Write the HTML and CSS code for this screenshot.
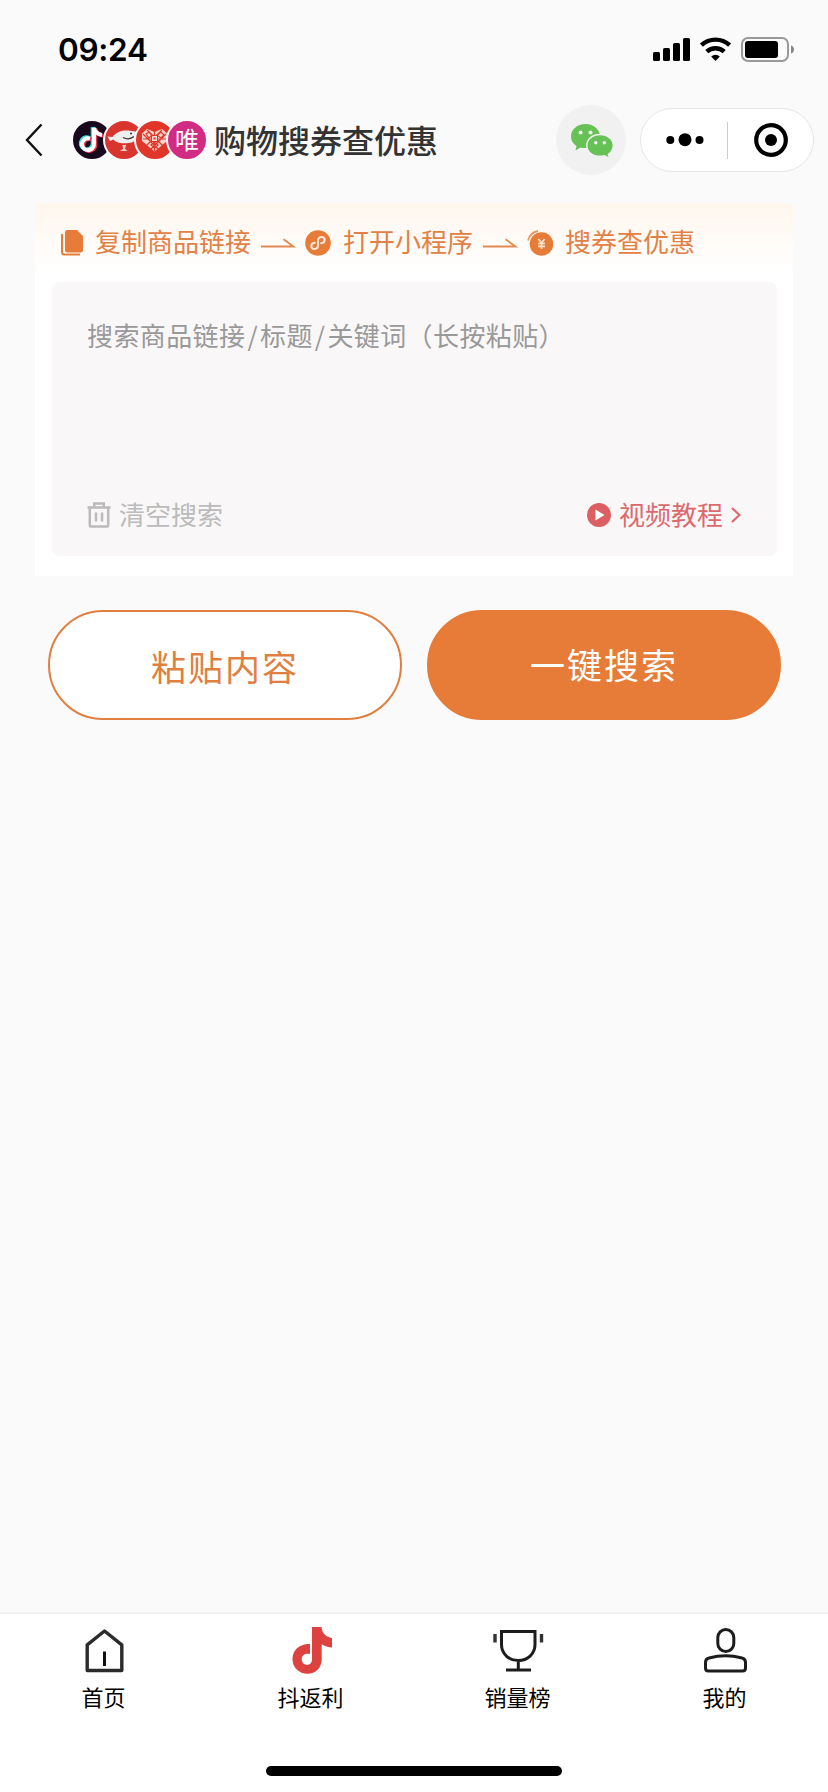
FILE: index.html
```html
<!DOCTYPE html>
<html lang="zh-CN">
<head>
    <meta charset="UTF-8">
    <meta name="viewport" content="width=device-width, initial-scale=1.0">
    <title>购物搜券查优惠</title>
    <link rel="stylesheet" href="styles.css">
</head>
<body>
    <div class="status-bar">
        <span class="time">09:24</span>
        <svg class="status-icons" width="142" height="26" viewBox="0 0 142 26">
            <rect x="0" y="15" width="7" height="9" rx="1.5"/>
            <rect x="10" y="11" width="7" height="13" rx="1.5"/>
            <rect x="20" y="6" width="7" height="18" rx="1.5"/>
            <rect x="30" y="1" width="7" height="23" rx="1.5"/>
            <g fill="none" stroke="#000" stroke-width="4.4">
                <path d="M48.4 8.2a20.5 20.5 0 0 1 28.2 0"/>
                <path d="M53.8 14.6a13 13 0 0 1 17.4 0"/>
            </g>
            <path d="M58.2 19.4a6.5 6.5 0 0 1 8.6 0L62.5 24z"/>
            <rect x="89" y="1" width="46" height="23" rx="6" fill="none" stroke="#999" stroke-width="2"/>
            <rect x="92" y="4" width="33" height="17" rx="3"/>
            <path d="M138 8.500c4 1 4 7 0 8z" fill="#888"/>
        </svg>
    </div>

    <div class="nav-bar">
        <svg class="back" width="18" height="34" viewBox="0 0 18 34">
            <path d="M16.500 1.500L2 17l14.500 15.500" fill="none" stroke="#111" stroke-width="2.400"/>
        </svg>
        <div class="logos">
            <span class="logo douyin">
                <svg width="38" height="38" viewBox="0 0 38 38" fill="none" stroke-width="4">
                    <path d="M17 17.500a6 6 0 1 0 4 5.500V7c1 4 4 6.500 8 7" stroke="#35e3df" transform="translate(-1.300 -.8)"/>
                    <path d="M17 17.500a6 6 0 1 0 4 5.500V7c1 4 4 6.500 8 7" stroke="#ef3158" transform="translate(1.300 .8)"/>
                    <path d="M17 17.500a6 6 0 1 0 4 5.500V7c1 4 4 6.500 8 7" stroke="#fff"/>
                </svg>
            </span>
            <span class="logo jd">
                <svg width="38" height="38" viewBox="0 0 38 38">
                    <path d="M2.500 15.500l5 .5c3-4 8-6.500 13-6.500 4 0 8 .5 11 1.500v3c0 5-3 8-8 8-7 1-13-.5-15-3.500L5 20z" fill="#eee"/>
                    <path d="M18 16.500c4 2 8 1.500 11-1" fill="none" stroke="#333" stroke-width="1.300"/>
                    <circle cx="26" cy="12.500" r="1" fill="#333"/>
                    <path d="M17.500 24h3.500l-1 4h-2zM15 30l4-3 3.500 3z" fill="#f5cfc5"/>
                </svg>
            </span>
            <span class="logo pdd">
                <svg width="38" height="38" viewBox="0 0 38 38">
                    <path d="M18.500 30.500L6 20v-7.500l5-4.500 7.500 3L26 8l5 4.500V20z" fill="#f9d5cc"/>
                    <g fill="none" stroke="#e1352a" stroke-width="1.200">
                        <path d="M11 9l17 17M7 13l15 15M26 9L9 26M30 13L15 28M18.500 9v6M18.500 21v9M7 18h8M22 18h9"/>
                        <path d="M10 13l3-2 3 3-3 3zM21 14l4-3 3 3-3 3zM15 24l3.500-3 3.500 3-3.500 3z"/>
                    </g>
                    <rect x="15.500" y="14.500" width="6" height="6" fill="#f9d5cc" stroke="#e1352a"/>
                    <rect x="17.500" y="16.500" width="2" height="2" fill="#e1352a"/>
                </svg>
            </span>
            <span class="logo vip">唯</span>
        </div>
        <h1>购物搜券查优惠</h1>
        <div class="wechat">
            <svg width="44" height="36" viewBox="0 0 44 36">
                <path d="M15.500 1C7.200 1 1 6.500 1 13.500c0 4 2.200 7.500 5.500 9.500l-1 4.500 5-3c1.600.4 3.300.6 5 .6C24 25 30 20 30 13.500S24 1 15.500 1z" fill="#67c256"/>
                <circle cx="10.500" cy="9.500" r="2" fill="#f1f1f1"/>
                <circle cx="20.500" cy="9.500" r="2" fill="#f1f1f1"/>
                <path d="M30 11.500c-7.500 0-13.200 4.700-13.200 11 0 6.200 5.700 10.800 13.200 10.800 1.600 0 3-.2 4.400-.6l5 2.600-1-4c3-2 4.900-5 4.900-8.800 0-6.300-5.800-11-13.300-11z" fill="#67c256" stroke="#f1f1f1" stroke-width="1.400"/>
                <circle cx="25.800" cy="19.800" r="1.700" fill="#f1f1f1"/>
                <circle cx="34.300" cy="19.800" r="1.700" fill="#f1f1f1"/>
            </svg>
        </div>
        <div class="capsule">
            <svg class="more" width="38" height="14" viewBox="0 0 38 14">
                <circle cx="4.300" cy="7" r="4"/>
                <circle cx="19" cy="6.700" r="6.500"/>
                <circle cx="33.500" cy="7" r="4"/>
            </svg>
            <span class="divider"></span>
            <svg class="close" width="34" height="34" viewBox="0 0 34 34">
                <circle cx="17" cy="17" r="14.800" fill="none" stroke="#000" stroke-width="4.200"/>
                <circle cx="17" cy="17" r="6"/>
            </svg>
        </div>
    </div>

    <div class="card">
        <div class="steps">
            <svg width="24" height="26" viewBox="0 0 24 26">
                <path d="M5 2.500A2.500 2.500 0 0 1 7.500 0H17l6 6v14a2.500 2.500 0 0 1-2.500 2.500h-13A2.500 2.500 0 0 1 5 20z" fill="#e67c38"/>
                <path d="M2 4v18a2.500 2.500 0 0 0 2.500 2.500H20" fill="none" stroke="#e67c38" stroke-width="2"/>
            </svg>
            <span class="step-text">复制商品链接</span>
            <svg class="arrow" width="35" height="10" viewBox="0 0 35 10">
                <path d="M0 8.500h32.500L22.500 1.200" fill="none" stroke="#e28a50" stroke-width="1.800"/>
            </svg>
            <svg width="26" height="26" viewBox="0 0 26 26">
                <circle cx="13" cy="13" r="12.800" fill="#e67c38"/>
                <path d="M9.800 12.800C7.500 13 6.300 14.500 6.300 16c0 1.700 1.400 2.900 3.100 2.900 2.100 0 3.600-1.500 3.600-3.400v-5c0-1.900 1.500-3.400 3.600-3.400 1.700 0 3.100 1.200 3.100 2.900 0 1.500-1.200 3-3.500 3.200" fill="none" stroke="#fde8dc" stroke-width="2" stroke-linecap="round"/>
            </svg>
            <span class="step-text">打开小程序</span>
            <svg class="arrow" width="35" height="10" viewBox="0 0 35 10">
                <path d="M0 8.500h32.500L22.500 1.200" fill="none" stroke="#e28a50" stroke-width="1.800"/>
            </svg>
            <svg width="26" height="26" viewBox="0 0 26 26">
                <circle cx="14.500" cy="14" r="11.800" fill="#e67c38"/>
                <path d="M1 10.500A13 13 0 0 1 11 1" fill="none" stroke="#e9955f" stroke-width="1.800"/>
                <path d="M11.500 9l3 4 3-4M14.500 13v6M11 13.500h7M11 16.300h7" fill="none" stroke="#fde3d2" stroke-width="1.700"/>
            </svg>
            <span class="step-text">搜券查优惠</span>
        </div>
        <div class="search-box">
            <div class="placeholder">搜索商品链接<i>/</i>标题<i>/</i>关键词（长按粘贴）</div>
            <div class="box-footer">
                <div class="clear">
                    <svg width="24" height="26" viewBox="0 0 24 26" fill="none" stroke="#bbb" stroke-width="2.500">
                        <path d="M.5 5.500h23M7.200 5V1.400h9.600V5M2.800 5.500V23a1.600 1.600 0 0 0 1.600 1.600h15.200a1.600 1.600 0 0 0 1.600-1.600V5.500M9 10.500v9M15 10.500v9"/>
                    </svg>
                    <span>清空搜索</span>
                </div>
                <div class="tutorial">
                    <svg width="24" height="24" viewBox="0 0 24 24">
                        <circle cx="12" cy="12" r="12" fill="#db5f63"/>
                        <path d="M8.500 6.500v11l9-5.500z" fill="#fff"/>
                    </svg>
                    <span>视频教程</span>
                    <svg class="chevron" width="10" height="16" viewBox="0 0 10 16">
                        <path d="M1 1l7.500 7L1 15" fill="none" stroke="#db6a6e" stroke-width="2.200"/>
                    </svg>
                </div>
            </div>
        </div>
    </div>

    <div class="buttons">
        <button type="button" class="btn paste">粘贴内容</button>
        <button type="button" class="btn search">一键搜索</button>
    </div>

    <div class="tab-bar">
        <div class="tabs">
            <a class="tab">
                <svg width="52" height="50" viewBox="0 0 52 50" fill="none" stroke="#2b2b2b" stroke-width="3.400" stroke-linejoin="round">
                    <path d="M26.500 5L9.200 18.800V44.500h34.600V18.800z"/>
                    <path d="M26.500 25.500v14.500" stroke="#111" stroke-width="3"/>
                </svg>
                <span>首页</span>
            </a>
            <a class="tab">
                <svg width="52" height="50" viewBox="0 0 52 50">
                    <path d="M27 1h9.500c.5 6 4.500 10.300 10.500 11v9.500c-4 0-7.500-1.200-10.300-3.200V33c0 9-6.200 14.800-14 14.800C14 47.800 7.500 41.500 7.500 33c0-9 7-15.500 17.500-15v10c-5-1-8.300 1.300-8.300 5.200 0 3.300 2.500 5.600 5.600 5.600 3.200 0 4.700-2.500 4.700-6z" fill="#dd4240"/>
                </svg>
                <span>抖返利</span>
            </a>
            <a class="tab">
                <svg width="52" height="50" viewBox="0 0 52 50" fill="none" stroke="#1c1c1c" stroke-width="3">
                    <path d="M9.500 5.500h33.500v13c0 9.500-7.500 16-16.700 16s-16.800-6.500-16.800-16zM26.300 34.500v9M14 44h25"/>
                    <path d="M3 8v8.500M49.500 8v8.500" stroke="#333" stroke-width="3.400"/>
                </svg>
                <span>销量榜</span>
            </a>
            <a class="tab">
                <svg width="52" height="50" viewBox="0 0 52 50" fill="none" stroke="#1c1c1c" stroke-width="3">
                    <rect x="18.800" y="3.500" width="16" height="22" rx="8"/>
                    <path d="M6.500 36.500c0-2.500 1-4 3.500-4.500 10-2.600 23-2.600 33 0 2.500.5 3.500 2 3.500 4.500v5.500c0 2-1 3-3 3h-34c-2 0-3-1-3-3z"/>
                </svg>
                <span>我的</span>
            </a>
        </div>
        <div class="home-indicator"></div>
    </div>
</body>
</html>
```
FILE: styles.css
```css
* {
    box-sizing: border-box;
}
body {
    margin: 0;
    height: 1792px;
    display: flex;
    flex-direction: column;
    background-color: #fafafa;
    font-family: "Noto Sans CJK SC", sans-serif;
    overflow: hidden;
}
svg {
    display: block;
    flex: none;
}
.status-bar {
    height: 98px;
    padding: 0 33px 0 58px;
    display: flex;
    justify-content: space-between;
    align-items: center;
}
.time {
    margin-top: 1px;
    font-family: Inter, sans-serif;
    font-size: 31.500px;
    font-weight: 600;
    letter-spacing: -0.300px;
}
.status-icons {
    margin-top: 2px;
}
.nav-bar {
    height: 84px;
    padding: 0 14px 0 25px;
    display: flex;
    align-items: center;
}
.logos {
    display: flex;
    margin-left: 28px;
}
.logo {
    width: 42px;
    height: 42px;
    margin-right: -10.300px;
    border: 2px solid #fafafa;
    border-radius: 50%;
    overflow: hidden;
}
.douyin {
    background-color: #180a1c;
}
.jd {
    background-color: #d8352f;
}
.pdd {
    background-color: #e1352a;
}
.vip {
    margin-right: 0;
    background-color: #d22b82;
    color: #fff;
    font-size: 24px;
    line-height: 35px;
    text-align: center;
}
h1 {
    margin: 0 0 3px 6px;
    font-size: 32px;
    font-weight: 500;
    line-height: 48px;
    color: #333;
    white-space: nowrap;
}
.wechat {
    width: 70px;
    height: 70px;
    margin-left: auto;
    padding: 2px 0 0 2px;
    border-radius: 50%;
    background-color: #f1f1f1;
    display: flex;
    align-items: center;
    justify-content: center;
}
.capsule {
    width: 174px;
    height: 64px;
    margin-left: 14px;
    border: 1px solid #e6e6e6;
    border-radius: 32px;
    background-color: #fff;
    display: flex;
    align-items: center;
}
.more {
    margin-left: 25px;
}
.divider {
    width: 1px;
    height: 37px;
    margin-left: 23px;
    background-color: #ccc;
}
.close {
    margin-left: 26px;
}
.card {
    width: 758px;
    height: 373px;
    margin: 21px 0 0 35px;
    padding: 0 16px 20px 17px;
    background: linear-gradient(#fff6ee, #fff 70px);
    display: flex;
    flex-direction: column;
}
.steps {
    height: 79px;
    padding-left: 8px;
    display: flex;
    align-items: center;
    color: #e28145;
    font-size: 26px;
}
.step-text {
    margin: 0 10px 4px 12px;
    white-space: nowrap;
}
.step-text:first-of-type {
    margin-left: 11px;
}
.arrow {
    margin-right: 9px;
}
.search-box {
    flex: 1;
    padding: 33px 36px 20px 35px;
    border-radius: 8px;
    background-color: #f9f7f8;
    display: flex;
    flex-direction: column;
    justify-content: space-between;
    font-size: 26px;
    line-height: 40px;
}
.placeholder {
    color: #999;
    letter-spacing: 0.400px;
}
.placeholder i {
    margin: 0 2px;
    font-style: normal;
}
.box-footer,
.clear,
.tutorial {
    display: flex;
    align-items: center;
}
.box-footer {
    justify-content: space-between;
}
.box-footer span {
    margin-bottom: 2px;
}
.clear {
    gap: 8px;
    color: #bbb;
}
.tutorial {
    gap: 8px;
    color: #db6a6e;
}
.buttons {
    margin: 34px 47px 0 48px;
    display: flex;
    justify-content: space-between;
}
.btn {
    width: 354px;
    height: 110px;
    padding: 0 0 3px;
    border: 2px solid #e07f40;
    border-radius: 55px;
    font-family: inherit;
    font-size: 35px;
    letter-spacing: 2px;
}
.paste {
    padding: 0;
    background-color: #fff;
    color: #e07f40;
}
.search {
    border-color: #e67c38;
    background-color: #e67c38;
    color: #fff;
}
.tab-bar {
    height: 180px;
    margin-top: auto;
    padding-top: 12px;
    border-top: 2px solid #f1f1f1;
    background-color: #fff;
}
.tabs {
    display: grid;
    grid-template-columns: repeat(4, 1fr);
}
.tab {
    display: flex;
    flex-direction: column;
    align-items: center;
    font-size: 22px;
    line-height: 32px;
    color: #000;
}
.tab span {
    margin: 4px 0 2px;
}
.home-indicator {
    width: 296px;
    height: 10px;
    margin: 52px auto 0;
    border-radius: 5px;
    background-color: #000;
}
```
